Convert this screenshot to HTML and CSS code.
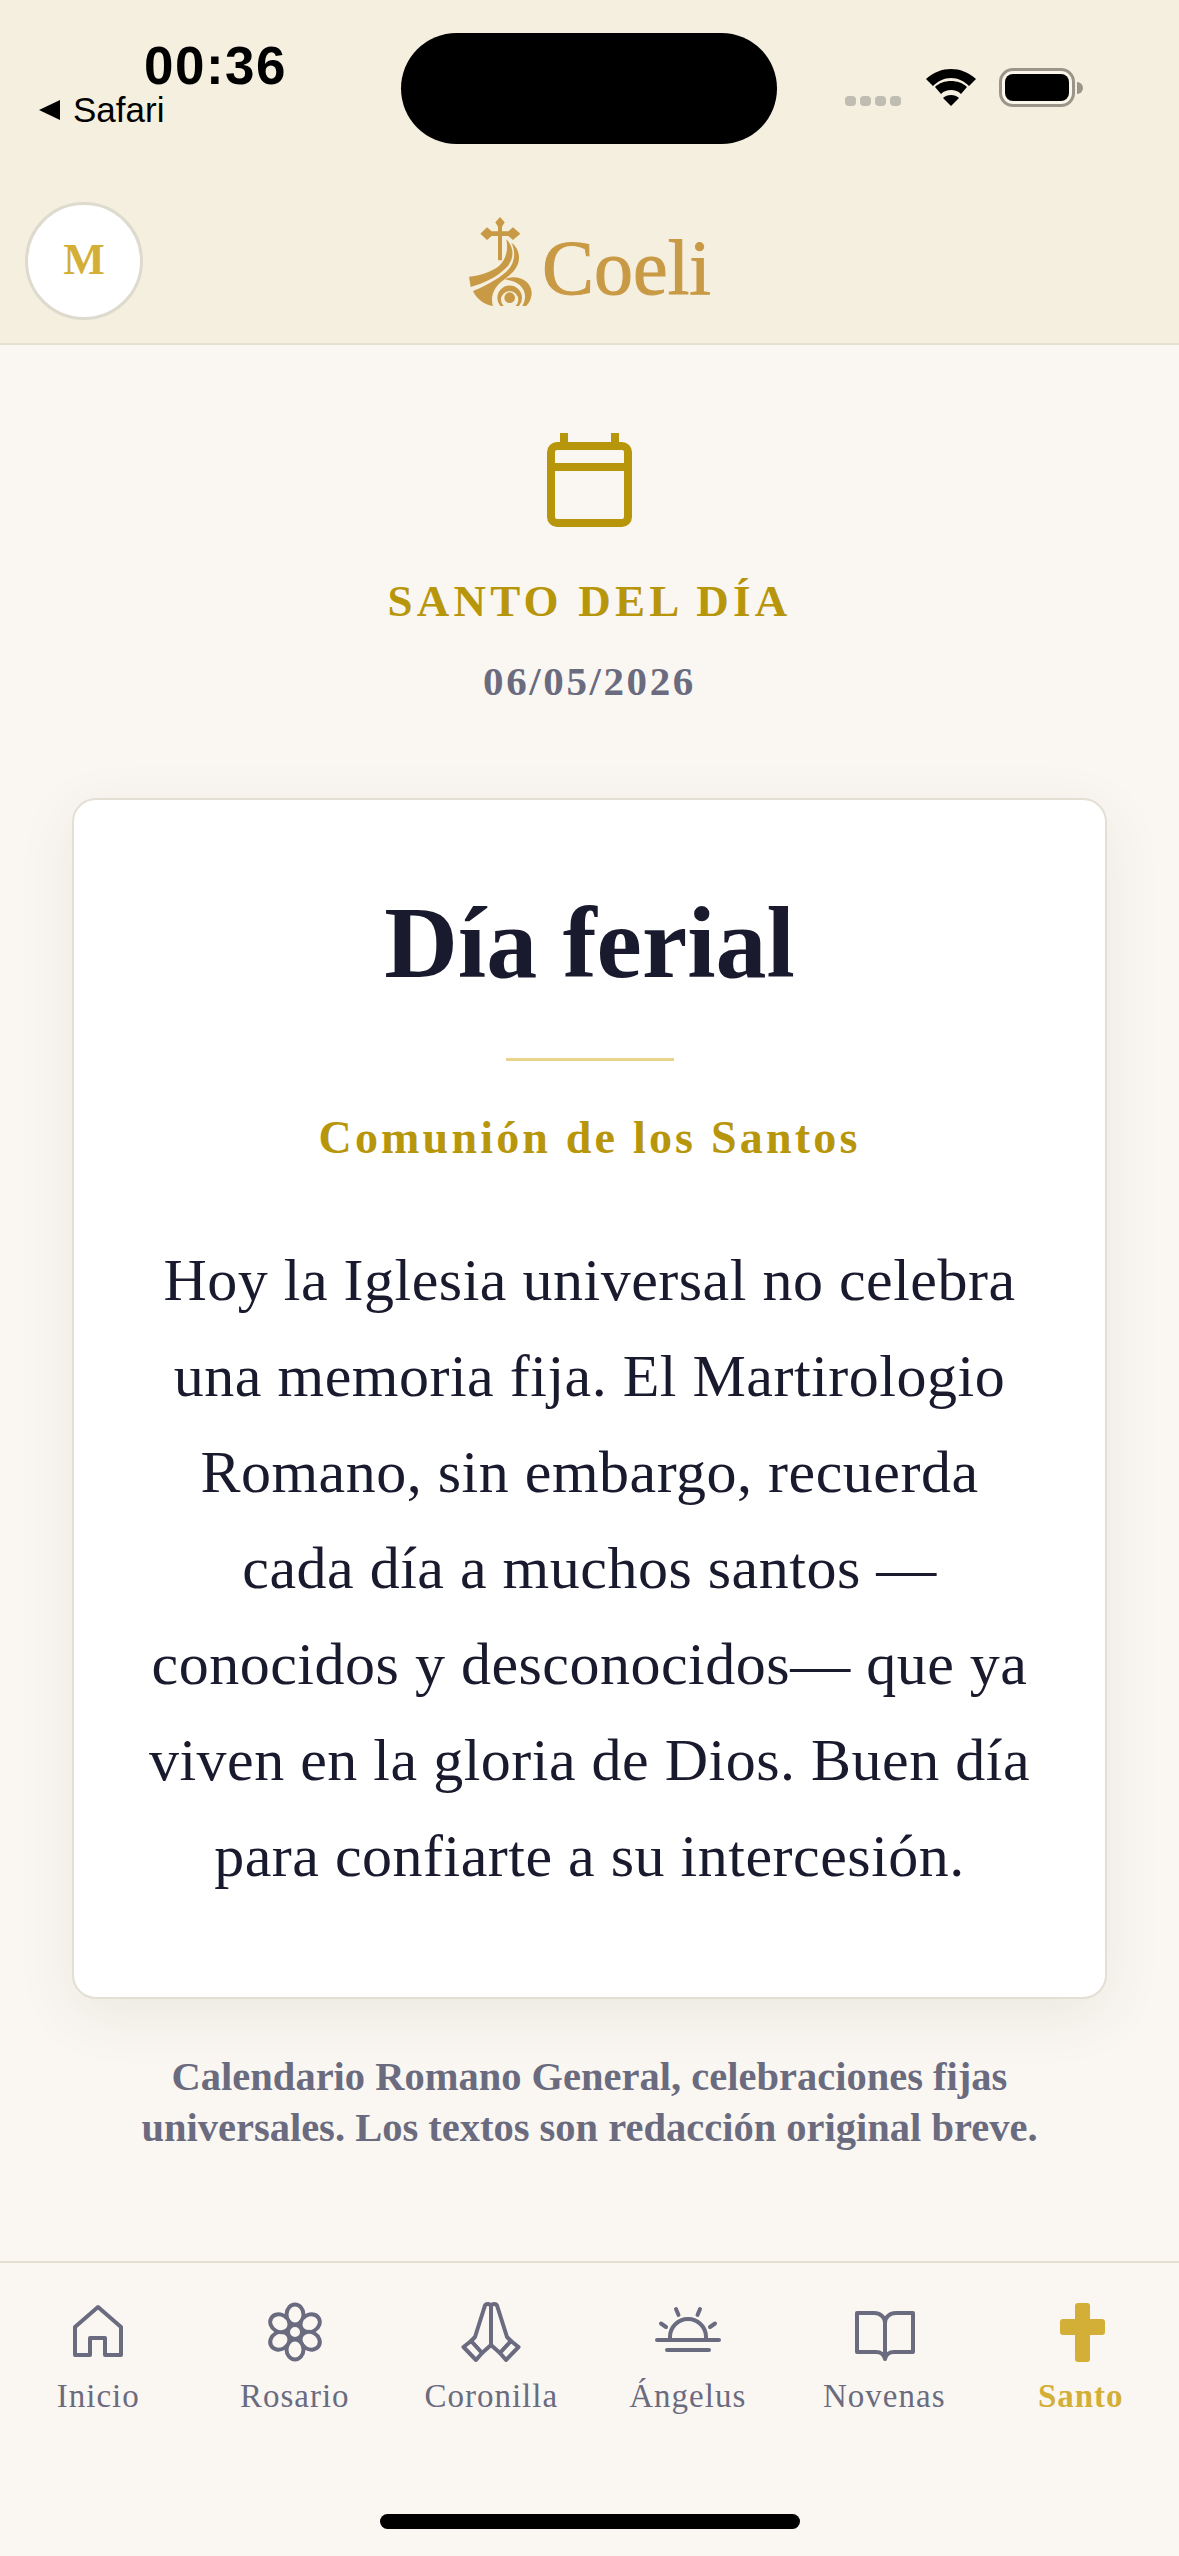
FILE: index.html
```html
<!DOCTYPE html>
<html lang="es">
<head>
    <meta charset="UTF-8">
    <meta name="viewport" content="width=device-width, initial-scale=1.0">
    <title>Coeli - Santo del día</title>
    <link rel="stylesheet" href="styles.css">
</head>
<body>
    <div class="screen">
        <header class="top">
            <div class="status">
                <div class="status-left">
                    <div class="time">00:36</div>
                    <div class="back"><span class="back-arrow"></span>Safari</div>
                </div>
                <div class="island"></div>
                <div class="status-right">
                    <div class="signal"><i></i><i></i><i></i><i></i></div>
                    <svg class="wifi" viewBox="0 0 50 38">
                        <path d="M0 10 C8 3 16 0 25 0 C34 0 42 3 50 10 L43 17 C38 12 32 9 25 9 C18 9 12 12 7 17 Z"/>
                        <path d="M9 18 C13 14 19 12 25 12 C31 12 37 14 41 18 L35 25 C32 22 29 21 25 21 C21 21 18 22 15 25 Z"/>
                        <path d="M17 29 C19 27 22 26 25 26 C28 26 31 27 33 29 L25 37 Z"/>
                    </svg>
                    <div class="battery"><div class="battery-fill"></div></div>
                    <div class="battery-nub"></div>
                </div>
            </div>
            <div class="brand-row">
                <div class="avatar">M</div>
                <div class="brand">
                    <svg class="brand-mark" viewBox="25 15 195 270">
                        <path d="M121 18 L135 34 L127 47 V61 H146 L160 49 L182 68 L160 87 L146 75 H127 V148 H115 V75 H96 L82 87 L62 68 L82 49 L96 61 H115 V47 L107 34 Z"/>
                        <path d="M140 85 C146 115 140 145 118 165 C95 183 60 195 28 197 L33 228 C70 218 110 200 138 172 C165 145 165 110 140 85 Z"/>
                        <path d="M155 95 C170 125 165 160 140 182 C110 208 75 225 40 240 C50 262 70 280 100 285 C92 260 100 232 125 212 C155 190 178 170 178 140 C178 122 170 105 155 95 Z"/>
                        <circle cx="150" cy="260" r="16"/>
                        <path d="M122 285 A37 37 0 1 1 178 285 L168 285 A26 26 0 1 0 132 285 Z"/>
                        <path d="M135 205 C165 188 215 205 216 245 C216 262 208 278 197 287 L188 284 C200 265 200 240 180 222 C168 212 150 208 135 205 Z"/>
                    </svg>
                    <span class="brand-name">Coeli</span>
                </div>
            </div>
        </header>

        <main class="content">
            <svg class="calendar" viewBox="0 0 85 94">
                <path d="M17 0 V12 M68 0 V12"/>
                <rect x="4" y="13" width="77" height="77" rx="6"/>
                <path d="M4 34 H81"/>
            </svg>
            <h2 class="eyebrow">SANTO DEL DÍA</h2>
            <div class="date">06/05/2026</div>

            <section class="card">
                <h1 class="card-title">Día ferial</h1>
                <div class="card-rule"></div>
                <h3 class="card-sub">Comunión de los Santos</h3>
                <p class="card-text">Hoy la Iglesia universal no celebra<br>una memoria fija. El Martirologio<br>Romano, sin embargo, recuerda<br>cada día a muchos santos —<br>conocidos y desconocidos— que ya<br>viven en la gloria de Dios. Buen día<br>para confiarte a su intercesión.</p>
            </section>

            <p class="note">Calendario Romano General, celebraciones fijas<br>universales. Los textos son redacción original breve.</p>
        </main>

        <nav class="tabs">
            <div class="tab-row">
                <a class="tab">
                    <svg viewBox="0 0 60 60"><path d="M7 53 V25 L30 5 L53 25 V53 H37 V36 H22 V53 Z"/></svg>
                    <span>Inicio</span>
                </a>
                <a class="tab">
                    <svg viewBox="0 0 60 60">
                        <ellipse cx="30" cy="12.5" rx="8.5" ry="10"/>
                        <ellipse cx="30" cy="12.5" rx="8.5" ry="10" transform="rotate(60 30 30)"/>
                        <ellipse cx="30" cy="12.5" rx="8.5" ry="10" transform="rotate(120 30 30)"/>
                        <ellipse cx="30" cy="12.5" rx="8.5" ry="10" transform="rotate(180 30 30)"/>
                        <ellipse cx="30" cy="12.5" rx="8.5" ry="10" transform="rotate(240 30 30)"/>
                        <ellipse cx="30" cy="12.5" rx="8.5" ry="10" transform="rotate(300 30 30)"/>
                        <circle cx="30" cy="30" r="7"/>
                    </svg>
                    <span>Rosario</span>
                </a>
                <a class="tab">
                    <svg viewBox="0 0 60 60">
                        <path d="M30 43 V5 C30 1 24 1 23.5 5 L14 35 L10 39 L21 51 L30 43 L39 51 L50 39 L46 35 L36.5 5 C36 1 30 1 30 5"/>
                        <path d="M2.5 45 L10 39 L21 51 L15 58 Z M57.5 45 L50 39 L39 51 L45 58 Z"/>
                    </svg>
                    <span>Coronilla</span>
                </a>
                <a class="tab">
                    <svg viewBox="0 0 60 60">
                        <path d="M-1 38 H61 M9 48 H51 M12 38 V35 A18 18 0 0 1 48 35 V38"/>
                        <path d="M18 7 L20.5 13 M42 7 L39.5 13 M3 21.5 L8 25 M57 21.5 L52 25"/>
                    </svg>
                    <span>Ángelus</span>
                </a>
                <a class="tab">
                    <svg viewBox="0 0 60 60">
                        <path d="M3 11 H20 C26 11 31 15 31 21 C31 15 36 11 42 11 H59 V50 H40 C35 50 32 53 31 57 C30 53 27 50 22 50 H3 Z M31 21 V56"/>
                    </svg>
                    <span>Novenas</span>
                </a>
                <a class="tab tab-active">
                    <svg viewBox="0 0 60 60">
                        <rect x="24" y="1" width="15" height="59" rx="3"/>
                        <rect x="9" y="17" width="45" height="16" rx="3"/>
                    </svg>
                    <span>Santo</span>
                </a>
            </div>
            <div class="home-bar"></div>
        </nav>
    </div>
</body>
</html>
```

FILE: styles.css
```css
* {
    box-sizing: border-box;
}
body {
    margin: 0;
    background-color: #faf7f2;
    font-family: "Liberation Serif", serif;
}
.screen {
    display: flex;
    flex-direction: column;
    width: 1179px;
    height: 2556px;
    overflow: hidden;
}

/* header */
.top {
    height: 345px;
    background-color: #f5efdf;
    border-bottom: 2px solid #e3dfd3;
}
.status {
    display: flex;
    height: 144px;
    padding-top: 33px;
}
.status-left {
    width: 401px;
    padding: 8px 0 0 39px;
}
.time {
    margin-left: 105px;
    font-family: "Liberation Sans", sans-serif;
    font-size: 53px;
    font-weight: 700;
    line-height: 50px;
    letter-spacing: 1.5px;
    color: #000;
}
.back {
    display: flex;
    align-items: center;
    margin-top: 1px;
    font-family: "Liberation Sans", sans-serif;
    font-size: 35px;
    line-height: 36px;
    color: #000;
}
.back-arrow {
    width: 0;
    height: 0;
    margin-right: 13px;
    border-top: 10px solid transparent;
    border-bottom: 10px solid transparent;
    border-right: 21px solid #000;
}
.island {
    width: 376px;
    height: 111px;
    border-radius: 56px;
    background-color: #000;
}
.status-right {
    display: flex;
    align-items: flex-start;
    padding: 35px 0 0 68px;
}
.signal {
    display: flex;
    gap: 4px;
    margin-top: 28px;
}
.signal i {
    width: 11px;
    height: 10px;
    border-radius: 4px;
    background-color: #bfbcb1;
}
.wifi {
    width: 50px;
    height: 38px;
    margin: 1px 0 0 25px;
    fill: #000;
}
.battery {
    width: 76px;
    height: 39px;
    margin-left: 23px;
    padding: 3px;
    border: 3px solid #9a9588;
    border-radius: 14px;
    background-color: #faf6ea;
}
.battery-fill {
    height: 100%;
    border-radius: 8px;
    background-color: #000;
}
.battery-nub {
    width: 6px;
    height: 12px;
    margin: 14px 0 0 2px;
    border-radius: 0 6px 6px 0;
    background-color: #9a9588;
}
.brand-row {
    display: flex;
    align-items: center;
    height: 118px;
    margin-top: 58px;
    padding-left: 25px;
}
.avatar {
    display: flex;
    align-items: center;
    justify-content: center;
    width: 118px;
    height: 118px;
    padding-bottom: 4px;
    border: 3px solid #dedace;
    border-radius: 50%;
    background-color: #fff;
    font-size: 44px;
    font-weight: 700;
    color: #d4af37;
}
.brand {
    display: flex;
    align-items: flex-end;
    margin-left: 325px;
    color: #c99a45;
}
.brand-mark {
    width: 65px;
    height: 90px;
    fill: #c99a45;
}
.brand-name {
    margin: 0 0 -5px 9px;
    font-size: 78px;
    line-height: 86px;
    -webkit-text-stroke: 1px #c99a45;
}

/* main */
.content {
    flex: 1;
    display: flex;
    flex-direction: column;
    align-items: center;
    padding-top: 88px;
}
.calendar {
    width: 85px;
    height: 94px;
    fill: none;
    stroke: #b8960c;
    stroke-width: 8;
}
.eyebrow {
    margin: 46px 0 0;
    font-size: 45px;
    font-weight: 700;
    line-height: 56px;
    letter-spacing: 4.2px;
    color: #b8960c;
}
.date {
    margin-top: 28px;
    font-size: 41px;
    font-weight: 700;
    line-height: 48px;
    letter-spacing: 2.6px;
    color: #6b6b80;
}
.card {
    width: 1035px;
    height: 1201px;
    margin-top: 93px;
    padding-top: 83px;
    border: 2px solid #e3dfd3;
    border-radius: 24px;
    background-color: #fff;
    box-shadow: 0 16px 60px rgba(60, 50, 30, 0.08);
    text-align: center;
}
.card-title {
    margin: 0;
    font-size: 102px;
    font-weight: 700;
    line-height: 120px;
    color: #1a1a2e;
}
.card-rule {
    width: 168px;
    height: 3px;
    margin: 55px auto 0;
    background-color: #e8d48b;
}
.card-sub {
    margin: 50px 0 0;
    font-size: 46px;
    font-weight: 700;
    line-height: 54px;
    letter-spacing: 3.2px;
    color: #b8960c;
}
.card-text {
    margin: 67px 0 0;
    font-size: 60px;
    line-height: 96px;
    letter-spacing: 0.5px;
    color: #1a1a2e;
}
.note {
    margin: 52px 0 0;
    font-size: 40.5px;
    font-weight: 700;
    line-height: 51px;
    text-align: center;
    color: #6b6b80;
}

/* bottom tabs */
.tabs {
    height: 295px;
    padding-top: 39px;
    border-top: 2px solid #e3dfd3;
}
.tab-row {
    display: grid;
    grid-template-columns: repeat(6, 1fr);
}
.tab {
    display: flex;
    flex-direction: column;
    align-items: center;
    font-size: 33px;
    line-height: 40px;
    letter-spacing: 1px;
    color: #6b6b80;
}
.tab svg {
    width: 60px;
    height: 60px;
    margin-bottom: 14px;
    overflow: visible;
    fill: #faf7f2;
    stroke: #6b6b80;
    stroke-width: 4;
    stroke-linecap: round;
    stroke-linejoin: round;
}
.tab-active {
    font-weight: 700;
    color: #d4af37;
}
.tab-active svg {
    fill: #d4af37;
    stroke: none;
}
.home-bar {
    width: 420px;
    height: 15px;
    margin: 98px auto 0;
    border-radius: 8px;
    background-color: #000;
}
```
